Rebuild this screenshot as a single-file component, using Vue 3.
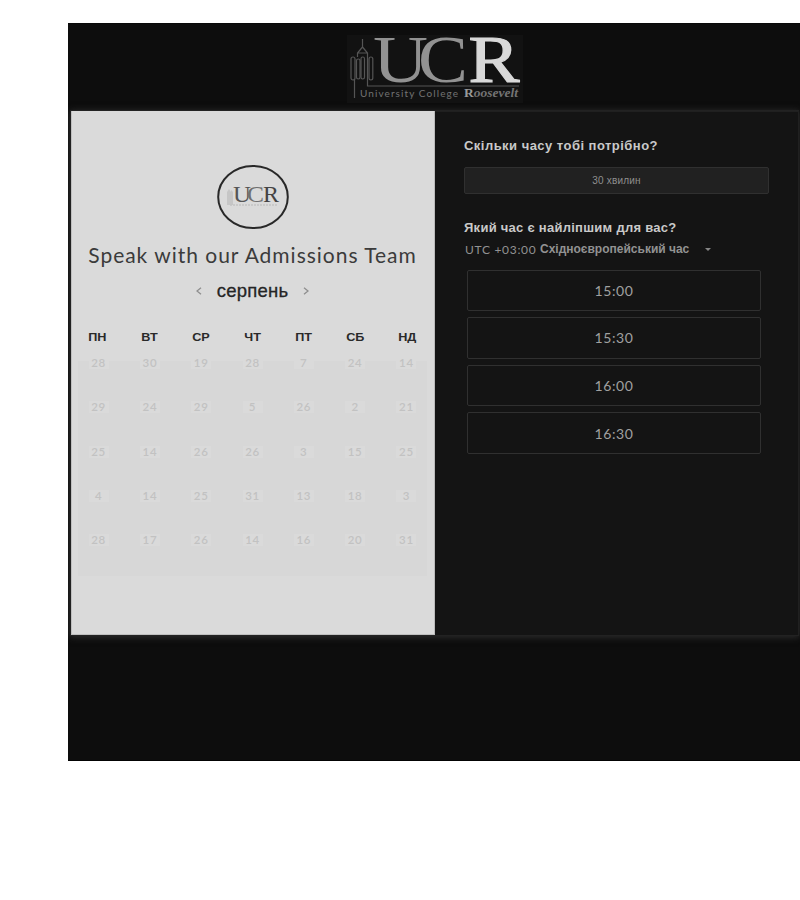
<script setup>
const weekdays = ['ПН', 'ВТ', 'СР', 'ЧТ', 'ПТ', 'СБ', 'НД']
const weeks = [
  [28, 30, 19, 28, 7, 24, 14],
  [29, 24, 29, 5, 26, 2, 21],
  [25, 14, 26, 26, 3, 15, 25],
  [4, 14, 25, 31, 13, 18, 3],
  [28, 17, 26, 14, 16, 20, 31],
]
const slots = ['15:00', '15:30', '16:00', '16:30']
</script>

<template>
  <main class="page">
    <header class="header">
      <svg class="logo" width="176" height="68" viewBox="0 0 176 68">
        <rect width="176" height="68" fill="#121212" />
        <g fill="none" stroke="#555" stroke-width="1.2">
          <path d="M15.500 4v9M15.500 12l-5 6v4M15.500 12l5 6v4M10.500 18h10" />
          <rect x="4" y="22" width="4" height="23" rx="2" />
          <rect x="9.500" y="24" width="3.500" height="20" rx="1.700" />
          <rect x="14" y="22" width="3.500" height="22" rx="1.700" />
          <rect x="22" y="22" width="3.800" height="23" rx="1.900" />
          <path d="M7.500 44v19M20.500 22v29H172" />
        </g>
        <g class="letters" font-size="67">
          <text x="26" y="47" textLength="55" lengthAdjust="spacingAndGlyphs" fill="#929292">U</text>
          <text x="71" y="47" textLength="50" lengthAdjust="spacingAndGlyphs" fill="#929292">C</text>
          <text x="121.500" y="47" textLength="51" lengthAdjust="spacingAndGlyphs" fill="#d9d9d9" stroke="#d9d9d9" stroke-width="1.200">R</text>
        </g>
        <text class="caption" x="13" y="61.500" textLength="98">University College</text>
        <text class="caption-serif" x="117" y="61.500" textLength="54" lengthAdjust="spacingAndGlyphs"><tspan fill="#999" font-style="normal">R</tspan>oosevelt</text>
      </svg>
    </header>

    <section class="scheduler">
      <div class="calendar">
        <svg class="badge" width="74" height="66" viewBox="0 0 74 66">
          <ellipse cx="37" cy="33" rx="34.800" ry="31" fill="none" stroke="#282828" stroke-width="2" />
          <g fill="#c6c6c6">
            <path d="M11 41V28l2-3 2 3v-2l2 2v13z" />
          </g>
          <g class="letters" font-size="22.500">
            <text x="17" y="38" textLength="18" lengthAdjust="spacingAndGlyphs" fill="#555">U</text>
            <text x="31" y="38" textLength="17" lengthAdjust="spacingAndGlyphs" fill="#707070">C</text>
            <text x="47" y="38" textLength="16" lengthAdjust="spacingAndGlyphs" fill="#444">R</text>
          </g>
          <path d="M14 41h48" stroke="#c3c3c3" stroke-width="1.500" stroke-dasharray="2 1" />
        </svg>
        <h1 class="title"><span>Speak with our Admissions Team</span></h1>
        <div class="month">
          <svg width="6" height="8" viewBox="0 0 6 8"><path d="M5 .8 1 4l4 3.200" /></svg>
          <span>серпень</span>
          <svg width="6" height="8" viewBox="0 0 6 8"><path d="m1 .8 4 3.200-4 3.200" /></svg>
        </div>
        <div class="weekdays">
          <span v-for="d in weekdays" :key="d"><b>{{ d }}</b></span>
        </div>
        <div class="days">
          <template v-for="(week, w) in weeks" :key="w">
            <div v-for="(day, i) in week" :key="i" class="cell"><span class="day">{{ day }}</span></div>
          </template>
        </div>
      </div>

      <div class="options">
        <h2 class="question first"><span>Скільки часу тобі потрібно?</span></h2>
        <button class="duration">30 хвилин</button>
        <h2 class="question second"><span>Який час є найліпшим для вас?</span></h2>
        <div class="timezone">
          <span class="utc">UTC +03:00</span>
          <span class="zone">Східноєвропейський час</span>
          <i class="caret"></i>
        </div>
        <div class="slots">
          <button v-for="s in slots" :key="s" class="slot">{{ s }}</button>
        </div>
      </div>
    </section>
  </main>
</template>

<style>
body {
  background: #fff;
}
</style>

<style scoped>
* {
  box-sizing: border-box;
}
.page {
  width: 732px;
  height: 738px;
  margin: 23px 0 0 68px;
  background: #0d0d0d;
  border-bottom: 1px solid #030303;
  overflow: hidden;
  font-family: 'Liberation Sans', sans-serif;
}
.header {
  height: 88px;
  padding: 11px 0 0 279px;
  border-top: 1px solid #090909;
}
.logo,
.badge {
  display: block;
}
.letters {
  font-family: 'Liberation Serif', serif;
}
.caption {
  font: 10px Lato, sans-serif;
  fill: #737373;
}
.caption-serif {
  font: italic bold 12px 'Liberation Serif', serif;
  fill: #747474;
}
.scheduler {
  display: flex;
  width: 727px;
  height: 524px;
  margin-left: 3px;
  background: #141414;
  box-shadow: 0 0 0 1px #222, 0 1px 7px 1px #303030;
}
.calendar {
  flex: none;
  width: 364px;
  background: #dadada;
  border-right: 1px solid #bbb;
  padding-top: 53px;
  display: flex;
  flex-direction: column;
  align-items: center;
  box-shadow: inset 1px -1px 0 #bfbfbf;
}
.title {
  margin: 11px 0 0;
  height: 27px;
  line-height: 27px;
  font: 400 21px/27px Lato, sans-serif;
  letter-spacing: 0.98px;
  color: #3b3b3b;
  white-space: nowrap;
}
.month {
  display: flex;
  align-items: center;
  gap: 15px;
  height: 26px;
  margin-top: 10px;
  font-size: 18.500px;
  letter-spacing: 0.25px;
  color: #252525;
  -webkit-text-stroke: 0.300px #252525;
}
.month svg {
  fill: none;
  stroke: #8e8e8e;
  stroke-width: 1.300;
}
.weekdays,
.days {
  display: grid;
  grid-template-columns: repeat(7, 1fr);
}
.weekdays {
  width: 361px;
  height: 18px;
  margin-top: 24px;
  text-align: center;
  font-size: 11.500px;
  line-height: 18px;
  color: #292929;
}
.weekdays b {
  display: inline-block;
  transform: scaleX(1.1);
}
.days {
  width: 349px;
  height: 215px;
  margin-top: 15px;
  background: #d7d7d7;
  grid-template-columns: repeat(7, 51.300px);
  grid-auto-rows: 44.300px;
  justify-content: center;
  overflow: visible;
}
.cell {
  display: flex;
  justify-content: center;
  align-items: flex-start;
}
.day {
  width: 20px;
  height: 12px;
  margin-top: -4px;
  background: #dadada;
  color: #c2c2c2;
  font: 600 11.500px/12px Lato, sans-serif;
  letter-spacing: 0.7px;
  text-align: center;
}
.options {
  flex: 1;
  padding: 25px 29px 0;
  border: 1px solid #202020;
  border-width: 1px 1px 0 0;
}
.question {
  margin: 0;
  height: 18px;
  font-size: 13px;
  line-height: 18px;
  color: #c9c9c9;
  white-space: nowrap;
}
.question span {
  display: inline-block;
  transform-origin: left;
}
.first {
  letter-spacing: 0.47px;
}
.second {
  margin-top: 25px;
  letter-spacing: 0.27px;
}
button {
  display: block;
  padding: 0;
  border: 1px solid #303030;
  border-radius: 2px;
  text-align: center;
}
.duration {
  width: 305px;
  height: 27px;
  margin-top: 12px;
  background: #212121;
  color: #8f8f8f;
  font: 10px 'Liberation Sans', sans-serif;
  letter-spacing: 0.2px;
}
.timezone {
  display: flex;
  align-items: center;
  height: 18px;
  margin-top: 3px;
  padding-left: 1px;
  color: #929292;
  white-space: nowrap;
}
.utc {
  width: 75px;
  font: 12px Lato, sans-serif;
  letter-spacing: 0.7px;
}
.zone {
  width: 159px;
  font-size: 12px;
  font-weight: 700;
}
.caret {
  margin-left: 6px;
  border: 3.500px solid transparent;
  border-top: 3px solid #858585;
  border-bottom: 0;
}
.slots {
  display: grid;
  grid-auto-rows: 41.500px;
  gap: 6.100px;
  margin: 11.500px 0 0 3px;
}
.slot {
  width: 294px;
  background: #141414;
  color: #a0a0a0;
  font: 14px Lato, sans-serif;
  letter-spacing: 0.6px;
}
</style>
